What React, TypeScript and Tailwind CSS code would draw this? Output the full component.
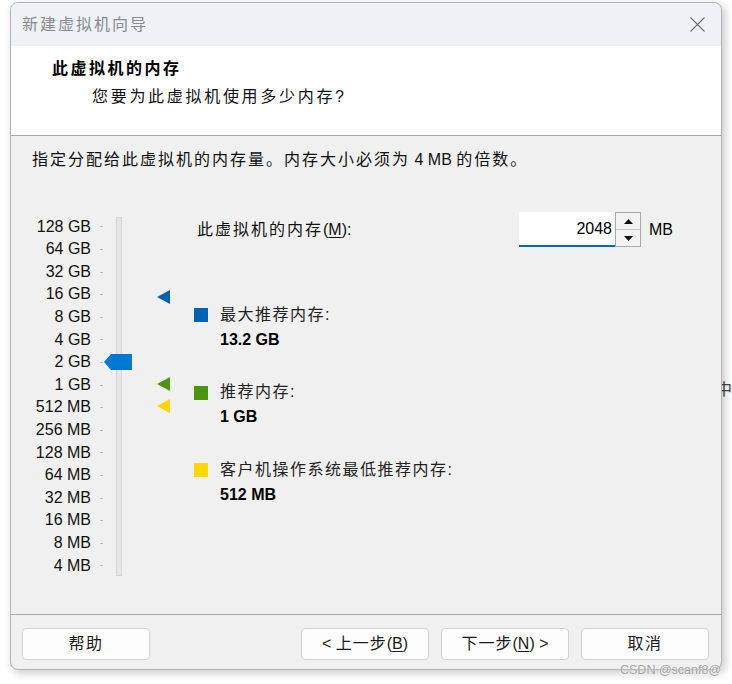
import React from "react";

// memory scale, top to bottom
const scale = [
  "128 GB", "64 GB", "32 GB", "16 GB", "8 GB", "4 GB", "2 GB", "1 GB",
  "512 MB", "256 MB", "128 MB", "64 MB", "32 MB", "16 MB", "8 MB", "4 MB",
];

const legend = [
  { color: "bg-[#0063b1]", label: "最大推荐内存:", value: "13.2 GB" },
  { color: "bg-[#4a9610]", label: "推荐内存:", value: "1 GB" },
  { color: "bg-[#fdd800]", label: "客户机操作系统最低推荐内存:", value: "512 MB" },
];

const Marker = ({ color, top }: { color: string; top: string }) => (
  <svg className={`absolute left-[146px] ${top}`} width="14" height="14" viewBox="0 0 14 14">
    <polygon points="0,7 13,0 13,14" fill={color} />
  </svg>
);

const Button = ({ children }: { children: React.ReactNode }) => (
  <button className="w-[128px] h-[32px] bg-[#fdfdfd] border border-[#d2d2d2] rounded-[4px] text-[16px] text-[#1a1a1a] flex items-center justify-center">
    {children}
  </button>
);

const App: React.FC = () => {
  return (
    <div className="relative w-[732px] h-[684px] bg-white overflow-hidden font-['Liberation_Sans','Noto_Sans_CJK_SC',sans-serif]">
      {/* text of the window behind */}
      <div className="absolute left-[716px] top-[378px] text-[16px] text-[#444] whitespace-nowrap">中:</div>

      <div className="relative z-10 ml-[10px] mt-[2px] w-[712px] h-[668px] rounded-[8px] border border-[#b3b3b3] overflow-hidden flex flex-col bg-[#f0f0f0] shadow-[3px_3px_10px_rgba(0,0,0,0.22)]">
        {/* title bar */}
        <div className="h-[43px] bg-[#eef2f7] flex items-center justify-between pl-[11px] pr-[16px]">
          <span className="text-[16px] tracking-[2px] text-[#8a8a8a]">新建虚拟机向导</span>
          <svg width="15" height="15" viewBox="0 0 15 15">
            <path d="M0.5 0.5 L14.5 14.5 M14.5 0.5 L0.5 14.5" stroke="#707070" strokeWidth="1.1" />
          </svg>
        </div>

        {/* header */}
        <div className="h-[90px] bg-white border-b border-[#a8a8a8] pt-[11px]">
          <div className="pl-[41px] leading-[24px] text-[16px] font-bold tracking-[2.5px] text-black">此虚拟机的内存</div>
          <div className="pl-[81px] mt-[4px] leading-[24px] text-[16px] text-[#111]">
            <span className="tracking-[2.7px]">您要为此虚拟机使用多少内存</span>?
          </div>
        </div>

        {/* body */}
        <div className="h-[478px] pt-[12px]">
          <div className="pl-[21px] leading-[24px] text-[16px] text-[#111]">
            <span className="tracking-[2px]">指定分配给此虚拟机的内存量。内存大小必须为</span> 4 MB{" "}
            <span className="tracking-[2px]">的倍数。</span>
          </div>

          <div className="mt-[40px] flex">
            {/* slider */}
            <div className="relative w-[183px] pt-[3.7px] flex">
              <div className="w-[80px] flex flex-col items-end text-[16px] text-[#111]">
                {scale.map((s) => (
                  <div key={s} className="h-[22.6px] leading-[22.6px] whitespace-nowrap">{s}</div>
                ))}
              </div>
              <div className="ml-[9px] w-[3px] flex flex-col">
                {scale.map((s) => (
                  <div key={s} className="h-[22.6px] flex items-center">
                    <div className="w-[3px] h-[1px] bg-[#bdbdbd]" />
                  </div>
                ))}
              </div>
              <div className="ml-[13px] w-[6px] my-[1px] bg-[#e6e6e6] border border-[#d6d6d6]" />

              <svg className="absolute left-[93px] top-[142px]" width="28" height="16" viewBox="0 0 28 16">
                <polygon points="0,8 7,0 28,0 28,16 7,16" fill="#0078d4" />
              </svg>
              <Marker color="#0063b1" top="top-[78px]" />
              <Marker color="#4a9610" top="top-[165px]" />
              <Marker color="#fdd800" top="top-[187px]" />
            </div>

            {/* right panel */}
            <div className="flex flex-col">
              <div className="h-[35px] flex items-center">
                <span className="ml-[3px] w-[322px] text-[16px] text-[#111]">
                  <span className="tracking-[2px]">此虚拟机的内存</span>(<span className="underline underline-offset-2">M</span>):
                </span>
                <div className="w-[96px] h-[35px] bg-white border-b-2 border-[#0067c0] flex items-center justify-end pr-[3px] text-[16px] text-black">
                  2048
                </div>
                <div className="w-[26px] h-[35px] border border-[#a9a9a9] bg-[#f3f3f3] flex flex-col">
                  <div className="flex-1 flex items-center justify-center border-b border-[#c4c4c4]">
                    <svg width="9" height="5" viewBox="0 0 9 5"><polygon points="4.5,0 9,5 0,5" fill="#111" /></svg>
                  </div>
                  <div className="flex-1 flex items-center justify-center">
                    <svg width="9" height="5" viewBox="0 0 9 5"><polygon points="0,0 9,0 4.5,5" fill="#111" /></svg>
                  </div>
                </div>
                <span className="ml-[8px] text-[16px] text-black">MB</span>
              </div>

              <div className="mt-[54.5px] flex flex-col gap-[27.5px]">
                {legend.map((l) => (
                  <div key={l.label} className="flex">
                    <div className={`w-[14px] h-[14px] mt-[6.5px] ${l.color}`} />
                    <div className="ml-[12px] leading-[25px] text-[16px]">
                      <div className="tracking-[1.5px] text-[#222]">{l.label}</div>
                      <div className="font-bold text-black">{l.value}</div>
                    </div>
                  </div>
                ))}
              </div>
            </div>
          </div>
        </div>

        {/* footer */}
        <div className="flex-1 border-t border-[#a8a8a8] pt-[13px] pl-[11px] pr-[12px] flex items-start justify-between">
          <Button><span className="tracking-[1.5px]">帮助</span></Button>
          <div className="flex gap-[12px]">
            <Button>
              &lt;&nbsp;<span className="tracking-[1px]">上一步</span>(<span className="underline underline-offset-2">B</span>)
            </Button>
            <Button>
              <span className="tracking-[1px]">下一步</span>(<span className="underline underline-offset-2">N</span>)&nbsp;&gt;
            </Button>
            <Button><span className="tracking-[1.5px]">取消</span></Button>
          </div>
        </div>
      </div>

      <div className="absolute z-20 left-[620px] top-[661px] whitespace-nowrap text-[12.5px] text-[#a5a5a5] [text-shadow:0_0_2px_#fff]">
        CSDN @scanf8@
      </div>
    </div>
  );
};

export default App;
